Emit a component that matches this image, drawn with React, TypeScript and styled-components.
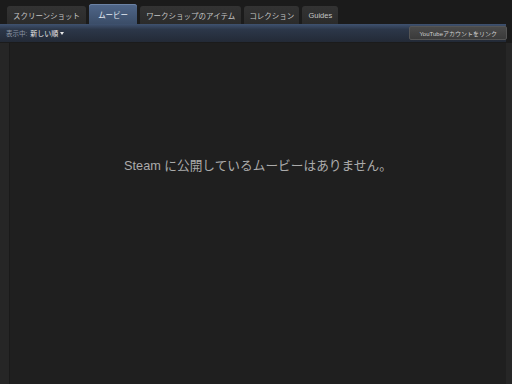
import styled, { createGlobalStyle } from 'styled-components';

const GlobalStyle = createGlobalStyle`
	html, body {
		margin: 0;
		padding: 0;
		background: #1b1b1b;
	}
	body {
		font-family: 'Liberation Sans', 'Noto Sans CJK JP', sans-serif;
	}
`;

const Page = styled.div`
	width: 512px;
	height: 384px;
	display: flex;
	flex-direction: column;
	background: #1b1b1b;
	overflow: hidden;
`;

const Tabs = styled.div`
	display: flex;
	align-items: flex-end;
	gap: 3px;
	height: 24px;
	padding-left: 7px;
`;

const Tab = styled.div<{ $active?: boolean; $pad?: number }>`
	display: flex;
	align-items: center;
	justify-content: center;
	height: ${(p) => (p.$active ? '20px' : '18px')};
	padding: 0 ${(p) => p.$pad ?? 6}px;
	font-size: 7.5px;
	color: ${(p) => (p.$active ? '#e4ebf4' : '#c4c4c4')};
	background: ${(p) =>
		p.$active
			? 'linear-gradient(to bottom, #50678a, #3b4d68)'
			: 'linear-gradient(to bottom, #333333, #2b2b2b)'};
	border-radius: 3px 3px 0 0;
	box-shadow: ${(p) => (p.$active ? 'inset 0 1px 0 #6c83a6' : 'none')};
	white-space: nowrap;
`;

const Toolbar = styled.div`
	display: flex;
	align-items: center;
	justify-content: space-between;
	height: 18px;
	margin-right: 6px;
	padding: 0 0 0 6px;
	background: linear-gradient(to bottom, #3f5270 0%, #2c3749 30%, #232a36 100%);
`;

const SortLabel = styled.div`
	display: flex;
	align-items: center;
	gap: 3px;
	font-size: 6.5px;
	color: #8c96a4;
`;

const SortValue = styled.span`
	display: flex;
	align-items: center;
	gap: 2px;
	font-size: 7px;
	color: #e8e8e8;
`;

const Caret = styled.span`
	width: 0;
	height: 0;
	border-left: 2.5px solid transparent;
	border-right: 2.5px solid transparent;
	border-top: 3px solid #e8e8e8;
`;

const LinkButton = styled.div`
	display: flex;
	align-items: center;
	height: 12px;
	margin-right: -1px;
	padding: 0 9px;
	font-size: 6px;
	color: #d0d0d0;
	background: linear-gradient(to bottom, #4a4a4a, #3a3a3a);
	border: 1px solid #555;
	border-radius: 2px;
`;

const Body = styled.div`
	flex: 1;
	display: flex;
	margin-top: 1px;
	background: #262626;
	padding: 0 6px 0 9px;
`;

const Panel = styled.div`
	flex: 1;
	display: flex;
	justify-content: center;
	padding-top: 112px;
	background: #1f1f1f;
	border-left: 1px solid #1a1a1a;
`;

const Empty = styled.div`
	font-size: 12.7px;
	color: #ababab;
	height: 16px;
`;

export default function App() {
	return (
		<Page>
			<GlobalStyle />
			<Tabs>
				<Tab>スクリーンショット</Tab>
				<Tab $active $pad={9}>ムービー</Tab>
				<Tab>ワークショップのアイテム</Tab>
				<Tab $pad={5}>コレクション</Tab>
				<Tab $pad={6}>Guides</Tab>
			</Tabs>
			<Toolbar>
				<SortLabel>
					表示中:
					<SortValue>
						新しい順
						<Caret />
					</SortValue>
				</SortLabel>
				<LinkButton>YouTubeアカウントをリンク</LinkButton>
			</Toolbar>
			<Body>
				<Panel>
					<Empty>Steam に公開しているムービーはありません。</Empty>
				</Panel>
			</Body>
		</Page>
	);
}
